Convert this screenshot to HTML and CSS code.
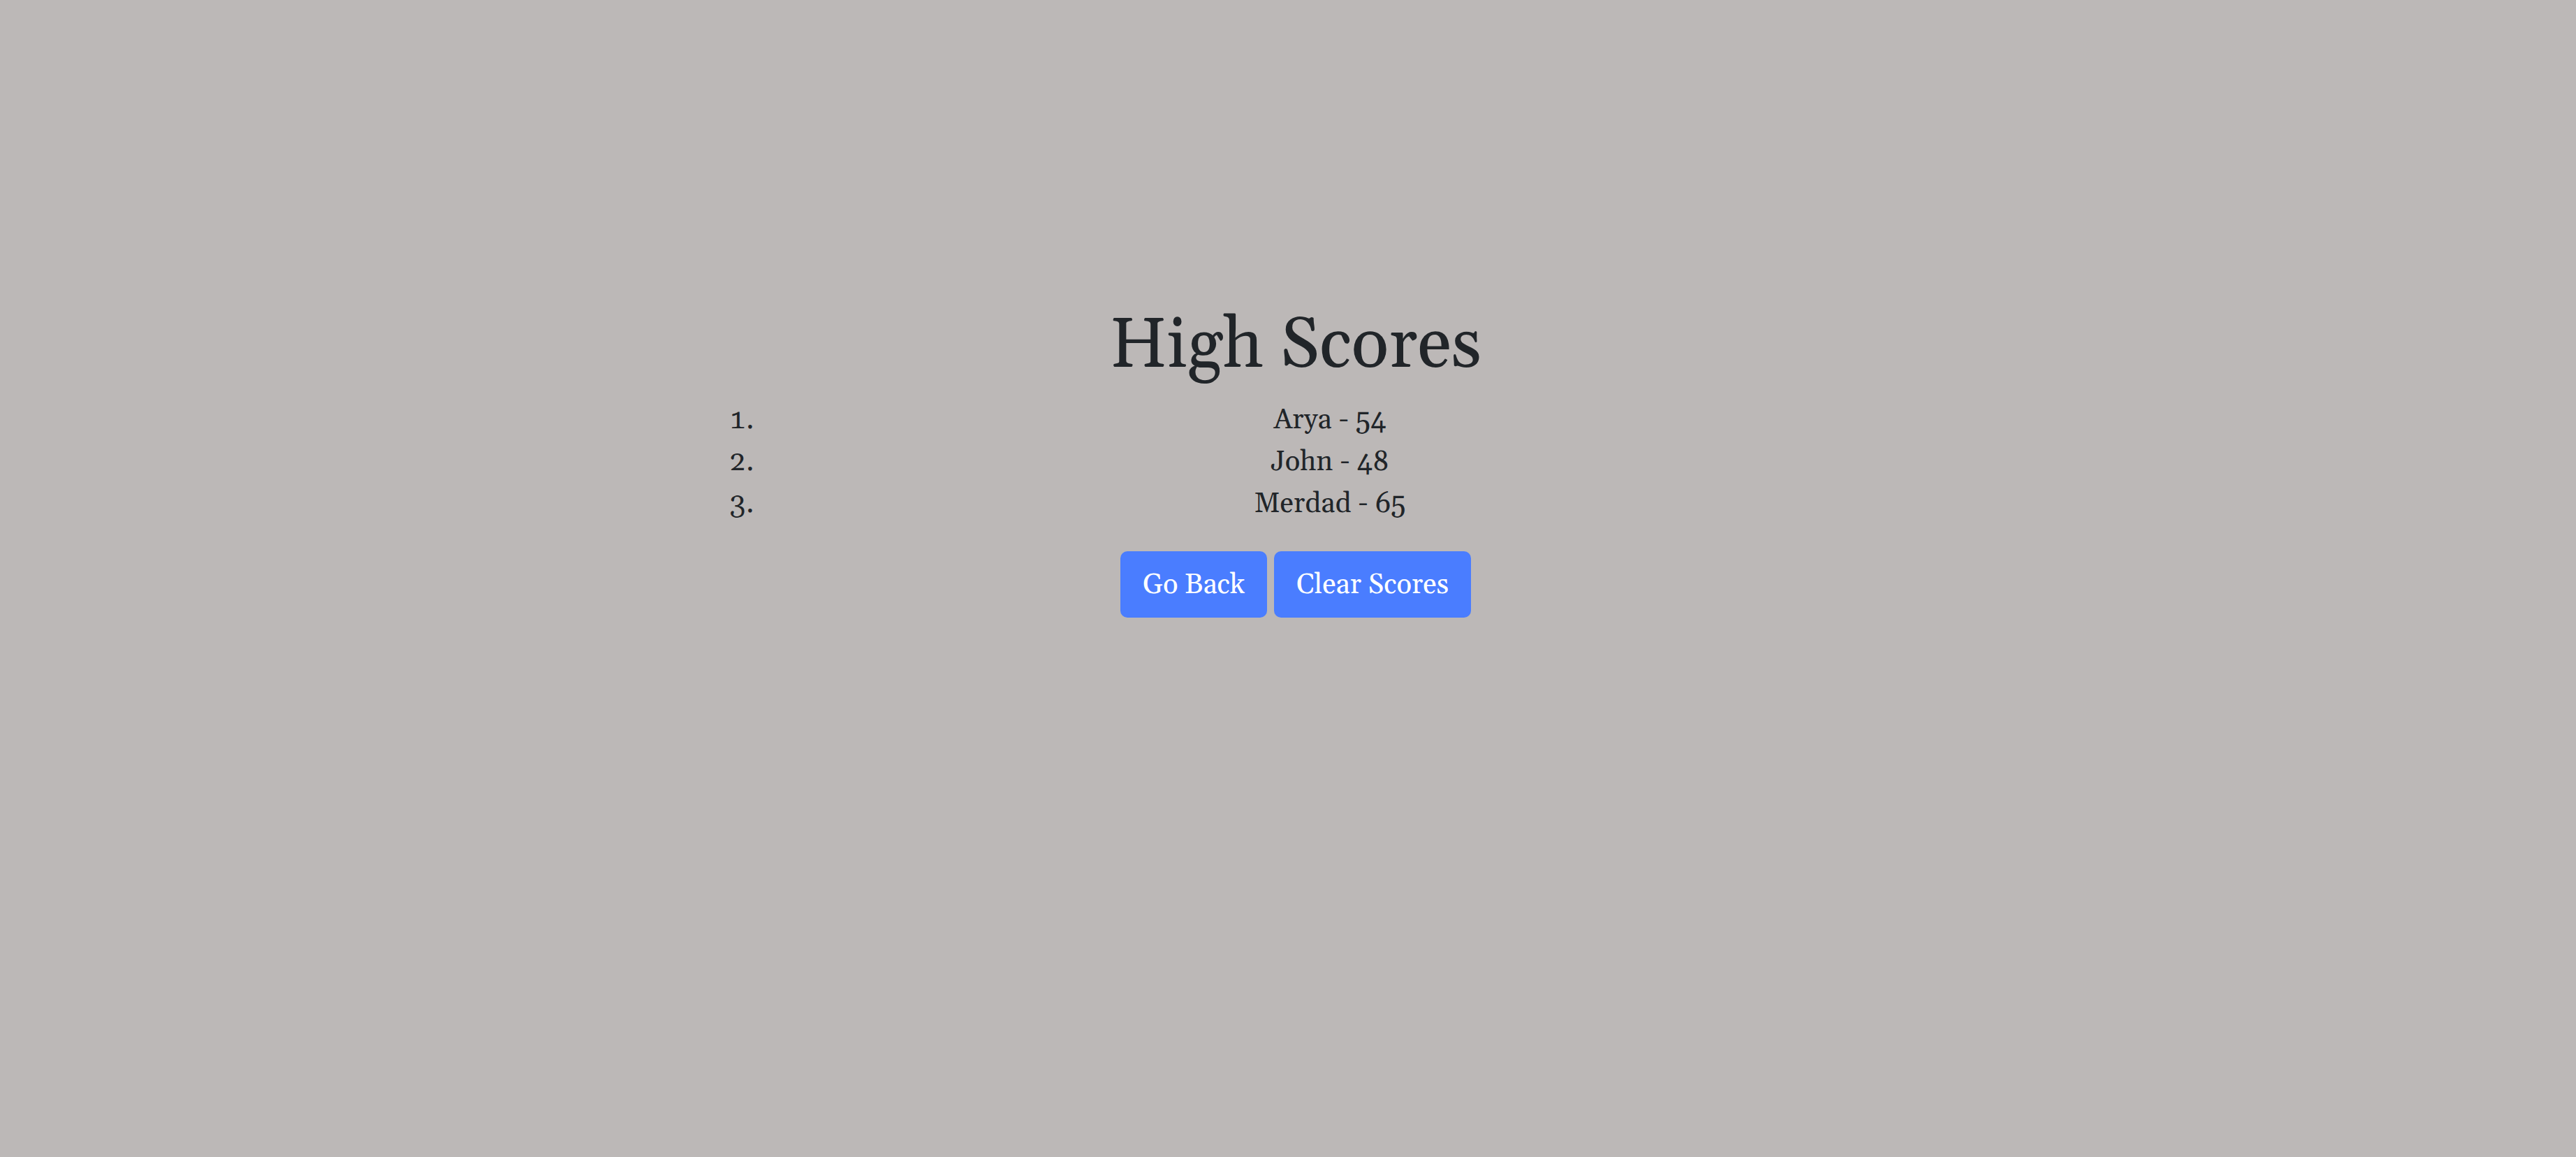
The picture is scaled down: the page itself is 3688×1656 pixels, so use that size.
FILE: index.html
```html
<!DOCTYPE html>
<html lang="en">
<head>
<meta charset="utf-8">
<title>High Scores</title>
<link rel="stylesheet" href="styles.css">
</head>
<body>
<main class="container">
  <h1 class="title">High Scores</h1>
  <ol class="scores">
    <li>Arya - 54</li>
    <li>John - 48</li>
    <li>Merdad - 65</li>
  </ol>
  <div class="actions">
    <button class="btn" type="button">Go Back</button>
    <button class="btn" type="button">Clear Scores</button>
  </div>
</main>
</body>
</html>
```
FILE: styles.css
```css
* { box-sizing: border-box; }
body {
  margin: 0;
  padding: 436px 0 0 22px;
  background: #bcb8b7;
  color: #212529;
  font-family: Georgia, Gelasio, "Liberation Serif", serif;
  font-size: 40px;
  line-height: 60px;
}
.container {
  max-width: 1728px;
  margin: 0 auto;
  text-align: center;
}
.title {
  margin: 0 0 16px;
  font-size: 100px;
  font-weight: 400;
  line-height: 120px;
}
.scores {
  margin: 0 0 37px;
  padding: 0 0 0 98px;
}
.actions {
  display: flex;
  justify-content: center;
  gap: 10px;
}
.btn {
  padding: 19px 32px 16px;
  border: 0;
  border-radius: 10px;
  background: #4a7dff;
  color: #fff;
  font: inherit;
  line-height: 60px;
  cursor: pointer;
}
```
